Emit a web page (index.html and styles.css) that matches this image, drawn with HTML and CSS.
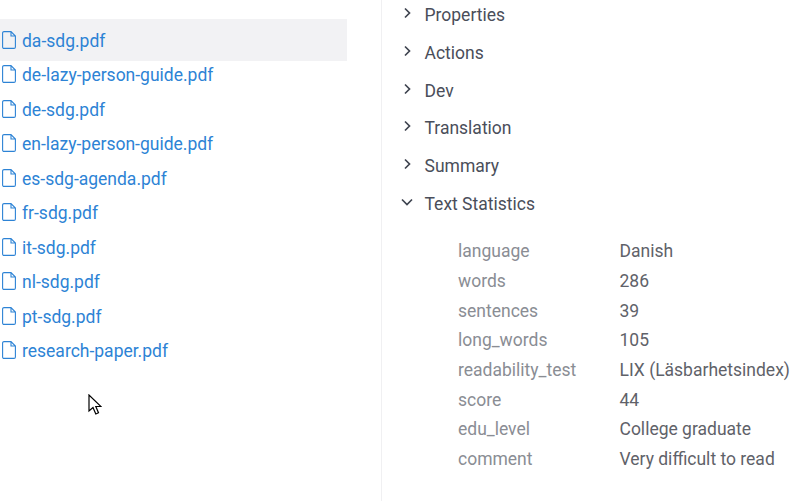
FILE: index.html
```html
<!DOCTYPE html>
<html lang="en">
<head>
<meta charset="utf-8">
<title>Files</title>
<link rel="stylesheet" href="styles.css">
</head>
<body>
<div class="page">
  <main class="left">
    <ul class="files">
      <li class="file active"><svg class="ficon" viewBox="0 0 14 18"><path d="M2 .6h7l4.400 4.400v11a1.400 1.400 0 0 1-1.400 1.400H2A1.400 1.400 0 0 1 .6 16V2A1.400 1.400 0 0 1 2 .6zM9 .6V5h4.400"/></svg><span>da-sdg.pdf</span></li>
      <li class="file"><svg class="ficon" viewBox="0 0 14 18"><path d="M2 .6h7l4.400 4.400v11a1.400 1.400 0 0 1-1.400 1.400H2A1.400 1.400 0 0 1 .6 16V2A1.400 1.400 0 0 1 2 .6zM9 .6V5h4.400"/></svg><span>de-lazy-person-guide.pdf</span></li>
      <li class="file"><svg class="ficon" viewBox="0 0 14 18"><path d="M2 .6h7l4.400 4.400v11a1.400 1.400 0 0 1-1.400 1.400H2A1.400 1.400 0 0 1 .6 16V2A1.400 1.400 0 0 1 2 .6zM9 .6V5h4.400"/></svg><span>de-sdg.pdf</span></li>
      <li class="file"><svg class="ficon" viewBox="0 0 14 18"><path d="M2 .6h7l4.400 4.400v11a1.400 1.400 0 0 1-1.400 1.400H2A1.400 1.400 0 0 1 .6 16V2A1.400 1.400 0 0 1 2 .6zM9 .6V5h4.400"/></svg><span>en-lazy-person-guide.pdf</span></li>
      <li class="file"><svg class="ficon" viewBox="0 0 14 18"><path d="M2 .6h7l4.400 4.400v11a1.400 1.400 0 0 1-1.400 1.400H2A1.400 1.400 0 0 1 .6 16V2A1.400 1.400 0 0 1 2 .6zM9 .6V5h4.400"/></svg><span>es-sdg-agenda.pdf</span></li>
      <li class="file"><svg class="ficon" viewBox="0 0 14 18"><path d="M2 .6h7l4.400 4.400v11a1.400 1.400 0 0 1-1.400 1.400H2A1.400 1.400 0 0 1 .6 16V2A1.400 1.400 0 0 1 2 .6zM9 .6V5h4.400"/></svg><span>fr-sdg.pdf</span></li>
      <li class="file"><svg class="ficon" viewBox="0 0 14 18"><path d="M2 .6h7l4.400 4.400v11a1.400 1.400 0 0 1-1.400 1.400H2A1.400 1.400 0 0 1 .6 16V2A1.400 1.400 0 0 1 2 .6zM9 .6V5h4.400"/></svg><span>it-sdg.pdf</span></li>
      <li class="file"><svg class="ficon" viewBox="0 0 14 18"><path d="M2 .6h7l4.400 4.400v11a1.400 1.400 0 0 1-1.400 1.400H2A1.400 1.400 0 0 1 .6 16V2A1.400 1.400 0 0 1 2 .6zM9 .6V5h4.400"/></svg><span>nl-sdg.pdf</span></li>
      <li class="file"><svg class="ficon" viewBox="0 0 14 18"><path d="M2 .6h7l4.400 4.400v11a1.400 1.400 0 0 1-1.400 1.400H2A1.400 1.400 0 0 1 .6 16V2A1.400 1.400 0 0 1 2 .6zM9 .6V5h4.400"/></svg><span>pt-sdg.pdf</span></li>
      <li class="file"><svg class="ficon" viewBox="0 0 14 18"><path d="M2 .6h7l4.400 4.400v11a1.400 1.400 0 0 1-1.400 1.400H2A1.400 1.400 0 0 1 .6 16V2A1.400 1.400 0 0 1 2 .6zM9 .6V5h4.400"/></svg><span>research-paper.pdf</span></li>
    </ul>
  </main>
  <aside class="right">
    <div class="section"><svg class="chev" viewBox="0 0 12 12"><path d="M4 1.500 8.500 6 4 10.500"/></svg><span>Properties</span></div>
    <div class="section"><svg class="chev" viewBox="0 0 12 12"><path d="M4 1.500 8.500 6 4 10.500"/></svg><span>Actions</span></div>
    <div class="section"><svg class="chev" viewBox="0 0 12 12"><path d="M4 1.500 8.500 6 4 10.500"/></svg><span>Dev</span></div>
    <div class="section"><svg class="chev" viewBox="0 0 12 12"><path d="M4 1.500 8.500 6 4 10.500"/></svg><span>Translation</span></div>
    <div class="section"><svg class="chev" viewBox="0 0 12 12"><path d="M4 1.500 8.500 6 4 10.500"/></svg><span>Summary</span></div>
    <div class="section"><svg class="chev" viewBox="0 0 12 12"><path d="M1 3.500 6 8.500 11 3.500"/></svg><span>Text Statistics</span></div>
    <dl class="stats">
      <div class="stat"><dt>language</dt><dd>Danish</dd></div>
      <div class="stat"><dt>words</dt><dd>286</dd></div>
      <div class="stat"><dt>sentences</dt><dd>39</dd></div>
      <div class="stat"><dt>long_words</dt><dd>105</dd></div>
      <div class="stat"><dt>readability_test</dt><dd>LIX (Läsbarhetsindex)</dd></div>
      <div class="stat"><dt>score</dt><dd>44</dd></div>
      <div class="stat"><dt>edu_level</dt><dd>College graduate</dd></div>
      <div class="stat"><dt>comment</dt><dd>Very difficult to read</dd></div>
    </dl>
  </aside>
</div>
<svg class="cursor" viewBox="0 0 14 22"><path d="M1 1v16l4-3.500 2.800 6.500 2.700-1.200L7.800 12.500H13z"/></svg>
</body>
</html>
```
FILE: styles.css
```css
* { box-sizing: border-box; }
html, body { margin: 0; height: 100%; background: #fff; overflow: hidden; }
body { font-family: Roboto, "Liberation Sans", sans-serif; font-size: 17.5px; }
.page { display: flex; height: 501px; }
.left { width: 382px; flex: none; border-right: 1px solid #f0f0f2; padding-top: 19.300px; }
.files { list-style: none; margin: 0; padding: 0; width: 347px; }
.file { display: flex; align-items: center; gap: 6.500px; height: 34.500px; padding-left: 1.500px; color: #2d83d5; white-space: nowrap; }
.file.active { height: 42px; padding-top: 1px; margin-bottom: -3.500px; background: #f2f2f4; }
.ficon { width: 14px; height: 18px; flex: none; fill: none; stroke: #2d83d5; stroke-width: 1.100; margin-top: -2px; }
.right { flex: 1; min-width: 0; margin-top: -3.500px; padding-left: 18.500px; color: #4a4e5a; }
.section { display: flex; align-items: center; height: 37.700px; gap: 12px; }
.chev { width: 12px; height: 12px; flex: none; margin-top: -4px; fill: none; stroke: #3f4450; stroke-width: 1.700; }
.stats { margin: 14px 0 0; padding: 0 0 0 57.500px; }
.stat { display: flex; height: 29.650px; align-items: center; white-space: nowrap; }
dt { width: 161.500px; flex: none; color: #8a8d94; }
dd { margin: 0; color: #5f6269; }
.cursor { position: absolute; left: 88px; top: 393.500px; width: 14px; height: 22px; fill: #fff; stroke: #000; stroke-width: 1.200; }
```
